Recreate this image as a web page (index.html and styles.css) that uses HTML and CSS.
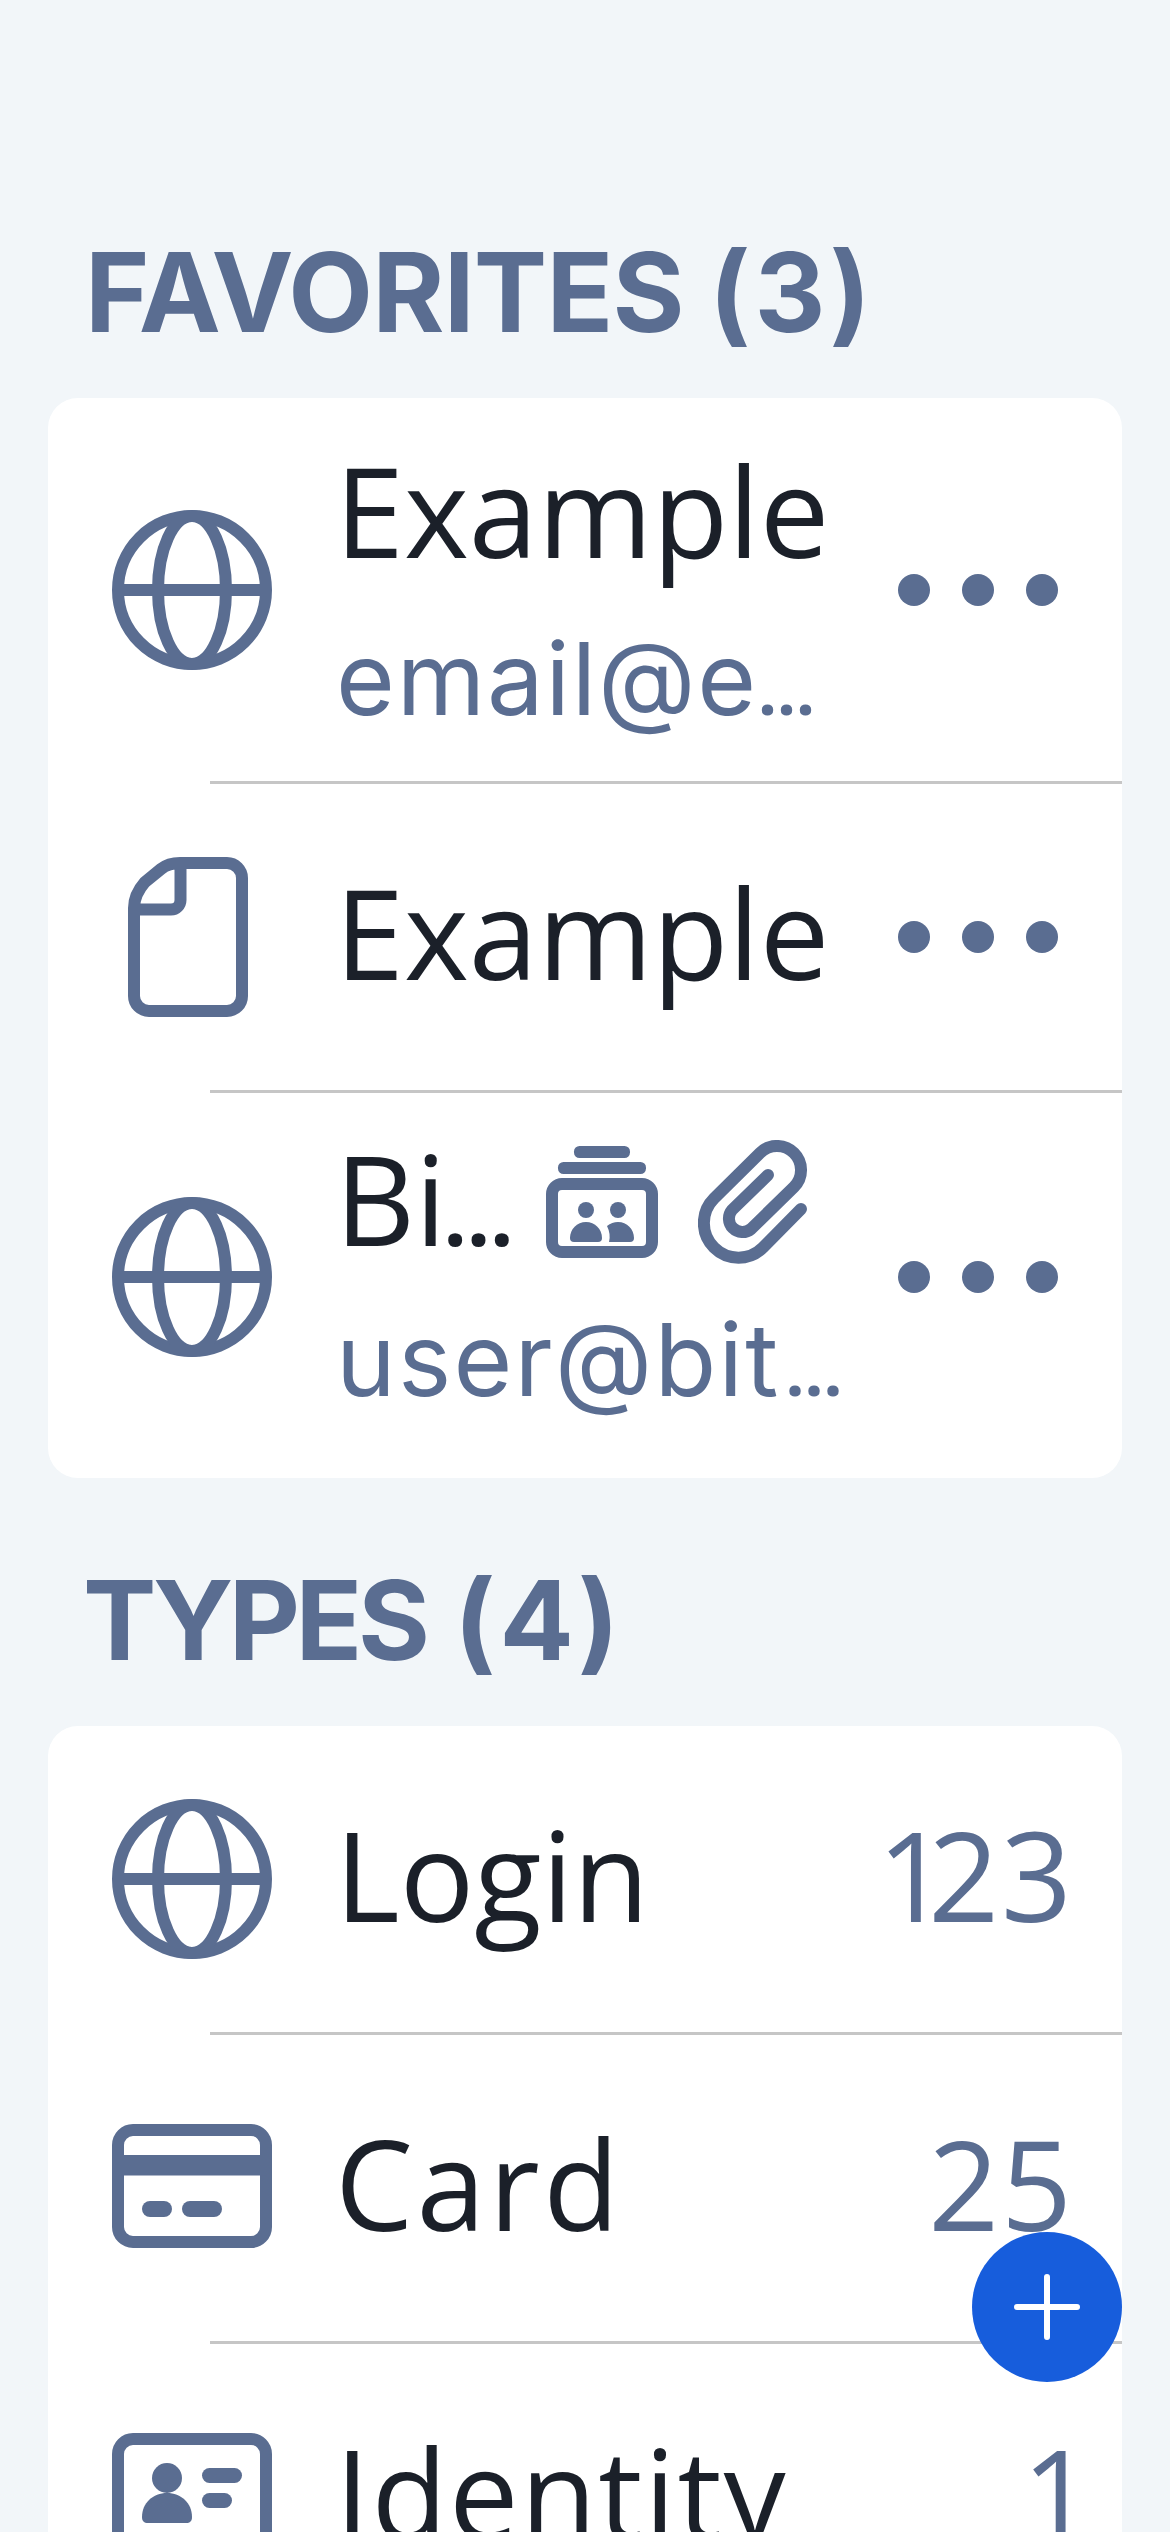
FILE: index.html
```html
<!DOCTYPE html>
<html lang="en">
<head>
<meta charset="utf-8">
<title>Vault</title>
<link rel="stylesheet" href="styles.css">
</head>
<body>
<svg class="defs" aria-hidden="true">
  <symbol id="globe" viewBox="0 0 160 160">
    <g fill="none" stroke="currentColor">
      <circle cx="80" cy="80" r="74" stroke-width="12"/>
      <ellipse cx="80" cy="80" rx="34" ry="74" stroke-width="12"/>
      <path d="M6 80H154" stroke-width="12"/>
    </g>
  </symbol>
  <symbol id="note" viewBox="0 0 160 160">
    <path d="M22 51C22 41 26 33 33 25L49 12C54 8 61 6 68 6H115A15 15 0 0 1 130 21V139A15 15 0 0 1 115 154H37A15 15 0 0 1 22 139ZM22 52.500H59A9.500 9.500 0 0 0 68.500 43V6" fill="none" stroke="currentColor" stroke-width="12"/>
  </symbol>
  <symbol id="card" viewBox="0 0 160 160">
    <rect x="6" y="22" width="148" height="112" rx="15" fill="none" stroke="currentColor" stroke-width="12"/>
    <path d="M6 47H154V67.500H6Z" fill="currentColor"/>
    <rect x="30" y="93" width="30" height="16" rx="8" fill="currentColor"/>
    <rect x="70" y="93" width="40" height="16" rx="8" fill="currentColor"/>
  </symbol>
  <symbol id="identity" viewBox="0 0 160 160">
    <rect x="6" y="22" width="148" height="116" rx="15" fill="none" stroke="currentColor" stroke-width="12"/>
    <g fill="currentColor">
      <circle cx="55" cy="61" r="15"/>
      <path d="M30 100C30 86 41 76 55 76S80 86 80 100C80 104 78 106 74 106H36C32 106 30 104 30 100Z"/>
      <rect x="90" y="51" width="40" height="15" rx="7.500"/>
      <rect x="90" y="76" width="30" height="15" rx="7.500"/>
    </g>
  </symbol>
  <symbol id="collection" viewBox="0 0 112 112">
    <g fill="currentColor">
      <rect x="28" y="0" width="56" height="12" rx="5.500"/>
      <rect x="12" y="16" width="88" height="12" rx="5.500"/>
      <circle cx="40" cy="64" r="8"/>
      <circle cx="72" cy="64" r="8"/>
      <path d="M24 92C24 83 31 76 40 76S56 83 56 92Q56 96 52 96H28Q24 96 24 92Z"/>
      <path d="M61 80Q66 76 72 76C81 76 88 83 88 92Q88 96 84 96H63Q65 88 61 80Z"/>
    </g>
    <rect x="6" y="38" width="100" height="68" rx="10" fill="none" stroke="currentColor" stroke-width="12"/>
  </symbol>
  <symbol id="clip" viewBox="0 0 110 124">
    <path d="M103 69L65 107.500A34.500 34.500 0 0 1 16 58.500L62 13A24 24 0 0 1 96 47L53 89A13.500 13.500 0 0 1 34 70L70 35" fill="none" stroke="currentColor" stroke-width="12" stroke-linecap="round"/>
  </symbol>
  <symbol id="dots" viewBox="0 0 160 32">
    <g fill="currentColor"><circle cx="16" cy="16" r="16"/><circle cx="80" cy="16" r="16"/><circle cx="144" cy="16" r="16"/></g>
  </symbol>
</svg>

<main class="vault">
  <h2 class="heading">FAVORITES <span class="total">(3)</span></h2>
  <section class="group favorites">
    <div class="row row-tall">
      <svg class="icon"><use href="#globe"/></svg>
      <div class="info info-spaced">
        <div class="name">Example</div>
        <div class="detail">email@e<span class="more">…</span></div>
      </div>
      <svg class="dots"><use href="#dots"/></svg>
    </div>
    <div class="row">
      <svg class="icon"><use href="#note"/></svg>
      <div class="info"><div class="name single">Example</div></div>
      <svg class="dots"><use href="#dots"/></svg>
    </div>
    <div class="row row-last">
      <svg class="icon"><use href="#globe"/></svg>
      <div class="info info-marked">
        <div class="name with-marks"><span class="short">Bi<span class="more">…</span></span><svg class="collection"><use href="#collection"/></svg><svg class="clip"><use href="#clip"/></svg></div>
        <div class="detail compact">user@bit<span class="more">…</span></div>
      </div>
      <svg class="dots"><use href="#dots"/></svg>
    </div>
  </section>

  <h2 class="heading types">TYPES <span class="total">(4)</span></h2>
  <section class="group">
    <div class="row">
      <svg class="icon"><use href="#globe"/></svg>
      <div class="info"><div class="name single">Login</div></div>
      <div class="count single"><span class="one">1</span>23</div>
    </div>
    <div class="row">
      <svg class="icon"><use href="#card"/></svg>
      <div class="info"><div class="name single wide">Card</div></div>
      <div class="count single">25</div>
    </div>
    <div class="row">
      <svg class="icon"><use href="#identity"/></svg>
      <div class="info"><div class="name single loose">Identity</div></div>
      <div class="count single solo">1</div>
    </div>
  </section>
</main>
<button class="add" aria-label="Add item">
  <svg viewBox="0 0 66 66"><path d="M33 3V63M3 33H63" stroke="currentColor" stroke-width="6" stroke-linecap="round"/></svg>
</button>
</body>
</html>
```
FILE: styles.css
```css
* { box-sizing: border-box; }
body {
  margin: 0;
  height: 2532px;
  overflow: hidden;
  background: #f2f6f9;
  color: #1b2029;
  font-family: "Open Sans", sans-serif;
}
.defs { display: none; }
svg { display: block; flex: none; }
.vault { height: 2532px; overflow: hidden; padding: 237px 48px 0; }
.heading {
  margin: 0;
  padding: 0 0 51px 37px;
  color: #5a6d91;
  font: 700 110px/110px Inter, sans-serif;
  letter-spacing: -0.8px;
  white-space: nowrap;
}
.types { padding-top: 87px; padding-left: 35px; letter-spacing: -4.5px; }
.total { letter-spacing: 4px; }
.types .total { margin-left: 7px; }
.group { background: #fff; border-radius: 30px; overflow: hidden; }
.favorites { padding-bottom: 18px; }
.row {
  display: flex;
  align-items: center;
  height: 309px;
  padding: 0 56px 3px 64px;
  background: linear-gradient(#c6c6c6, #c6c6c6) 162px 100% / 100% 3px no-repeat;
}
.row-tall { height: 386px; }
.row-last { height: 367px; padding-bottom: 0; background: none; }
.icon { width: 160px; height: 160px; color: #5a6d91; }
.info { flex: 1; min-width: 0; padding-left: 63px; white-space: nowrap; }
.info-spaced { padding-top: 20px; }
.info-marked { padding-top: 8px; }
.name { font-size: 124px; line-height: 158px; }
.single { padding-bottom: 10px; }
.wide { letter-spacing: 3.5px; }
.loose { letter-spacing: 1.8px; }
.detail {
  padding-left: 1px;
  color: #5a6d91;
  font-family: Inter, sans-serif;
  font-size: 101px;
  line-height: 179px;
  letter-spacing: 1.8px;
}
.compact { line-height: 165px; letter-spacing: 2.2px; }
.more {
  font-family: "Open Sans", sans-serif;
  font-size: 0.66em;
  font-weight: 700;
  letter-spacing: 0;
  line-height: 0;
}
.compact .more { margin-left: 5px; }
.with-marks { display: flex; align-items: center; height: 158px; }
.with-marks .more { margin-left: -3px; }
.short { width: 211px; }
.collection { width: 112px; height: 112px; color: #5a6d91; margin-top: 8px; }
.clip { width: 110px; height: 124px; margin: 8px 0 0 40px; color: #5a6d91; }
.dots { width: 160px; height: 32px; margin-right: 8px; color: #5a6d91; }
.count {
  margin-right: -8px;
  color: #5a6d91;
  font-size: 124px;
  line-height: 158px;
  letter-spacing: 2px;
  white-space: nowrap;
}
.one { letter-spacing: -20px; }
.solo { letter-spacing: -19px; }
.add {
  position: absolute;
  left: 972px;
  top: 2232px;
  width: 150px;
  height: 150px;
  display: grid;
  place-items: center;
  padding: 0;
  border: 0;
  border-radius: 50%;
  background: #175ddc;
  color: #fff;
}
.add svg { width: 66px; height: 66px; }
```
